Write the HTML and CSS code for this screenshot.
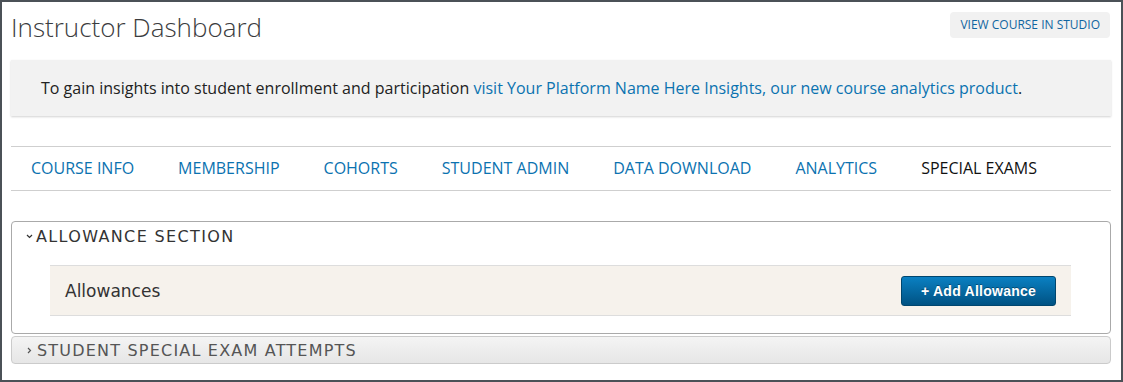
FILE: index.html
```html
<!DOCTYPE html>
<html lang="en">
<head>
    <meta charset="UTF-8">
    <meta name="viewport" content="width=device-width, initial-scale=1.0">
    <title>Instructor Dashboard</title>
    <link rel="stylesheet" href="styles.css">
</head>
<body>

    <div class="frame">
        <div class="page-header">
            <h1 class="page-title">Instructor Dashboard</h1>
            <a class="studio-link" href="#">View Course in Studio</a>
        </div>

        <div class="insights-note">
            To gain insights into student enrollment and participation
            <a href="#">visit Your Platform Name Here Insights, our new course analytics product</a>.
        </div>

        <nav class="tabs">
            <a class="tab" href="#">Course Info</a>
            <a class="tab" href="#">Membership</a>
            <a class="tab" href="#">Cohorts</a>
            <a class="tab" href="#">Student Admin</a>
            <a class="tab" href="#">Data Download</a>
            <a class="tab" href="#">Analytics</a>
            <a class="tab active" href="#">Special Exams</a>
        </nav>

        <!-- Allowance section -->
        <div class="accordion open">
            <div class="accordion-header">
                <svg class="chevron" width="7" height="5" viewBox="0 0 7 5">
                    <path d="M1 1 L3.5 3.5 L6 1" fill="none" stroke="#333" stroke-width="1.2"/>
                </svg>
                Allowance Section
            </div>
            <div class="allowance-panel">
                <span class="allowance-title">Allowances</span>
                <button class="add-button">+ Add Allowance</button>
            </div>
        </div>

        <div class="accordion closed">
            <div class="accordion-header">
                <svg class="chevron" width="5" height="7" viewBox="0 0 5 7">
                    <path d="M1 1 L3.5 3.5 L1 6" fill="none" stroke="#555" stroke-width="1.2"/>
                </svg>
                Student Special Exam Attempts
            </div>
        </div>
    </div>

</body>
</html>
```

FILE: styles.css
```css
body {
    margin: 0;
    font-family: 'Open Sans', sans-serif;
    color: #333;
    background: #fff;
}

.frame {
    height: 382px;
    box-sizing: border-box;
    border: 2px solid #4b5157;
    padding: 0 10px 0 9px;
    overflow: hidden;
}

.page-header {
    display: flex;
    justify-content: space-between;
    align-items: flex-start;
    padding-top: 10px;
    height: 48px;
}

.page-title {
    margin: 0;
    font-size: 26px;
    font-weight: 300;
    line-height: 31px;
    color: #3b3c3e;
}

.studio-link {
    display: block;
    height: 26px;
    line-height: 26px;
    padding: 0 10px;
    border-radius: 4px;
    background-color: #f1f1f1;
    color: #1065a0;
    font-size: 12px;
    text-transform: uppercase;
    text-decoration: none;
    margin-right: 1px;
}

.insights-note {
    height: 56px;
    line-height: 56px;
    padding: 0 30px;
    background-color: #f2f2f2;
    box-shadow: 0 1px 2px rgba(0, 0, 0, 0.18);
    font-size: 16px;
    color: #222;
}

.insights-note a {
    color: #0b72b0;
    text-decoration: none;
}

.tabs {
    display: flex;
    gap: 44px;
    margin-top: 30px;
    padding-left: 20px;
    height: 43px;
    line-height: 43px;
    border-top: 1px solid #cfcfcf;
    border-bottom: 1px solid #cfcfcf;
}

.tab {
    font-size: 16px;
    text-transform: uppercase;
    color: #0b72b0;
    text-decoration: none;
}

.tab.active {
    color: #111;
}

/* Акордеон */
.accordion {
    border: 1px solid #aaa;
    border-radius: 4px;
}

.accordion.open {
    margin-top: 30px;
    height: 113px;
    box-sizing: border-box;
}

.accordion.closed {
    margin-top: 2px;
    border-color: #cbcbcb;
    background: linear-gradient(#f4f4f4, #e6e6e6);
}

.accordion-header {
    display: flex;
    align-items: center;
    height: 28px;
    padding-left: 14px;
    font-family: 'DejaVu Sans', sans-serif;
    font-size: 16px;
    letter-spacing: 1.35px;
    text-transform: uppercase;
    color: #333;
}

.accordion.closed .accordion-header {
    height: 26px;
    color: #555;
    padding-left: 15px;
    letter-spacing: 1.2px;
}

.chevron {
    margin-right: 3px;
    margin-top: 1px;
}

.accordion.closed .chevron {
    margin-right: 5px;
}

.allowance-panel {
    display: flex;
    justify-content: space-between;
    align-items: center;
    margin: 15px 39px 0 38px;
    height: 49px;
    padding: 0 15px;
    background-color: #f6f2ec;
    border-top: 1px solid #ddd;
    border-bottom: 1px solid #ddd;
}

.allowance-title {
    font-family: 'DejaVu Sans', sans-serif;
    font-size: 17px;
    color: #333;
}

.add-button {
    width: 155px;
    height: 30px;
    border: 1px solid #00466e;
    border-radius: 3px;
    background: linear-gradient(#0a80c2, #005283);
    color: #fff;
    font-family: 'Liberation Sans', Arial, sans-serif;
    font-size: 14px;
    font-weight: bold;
    letter-spacing: 0.25px;
    text-shadow: 0 -1px 0 rgba(0, 0, 0, 0.35);
    cursor: pointer;
    margin-top: 1px;
}
```
